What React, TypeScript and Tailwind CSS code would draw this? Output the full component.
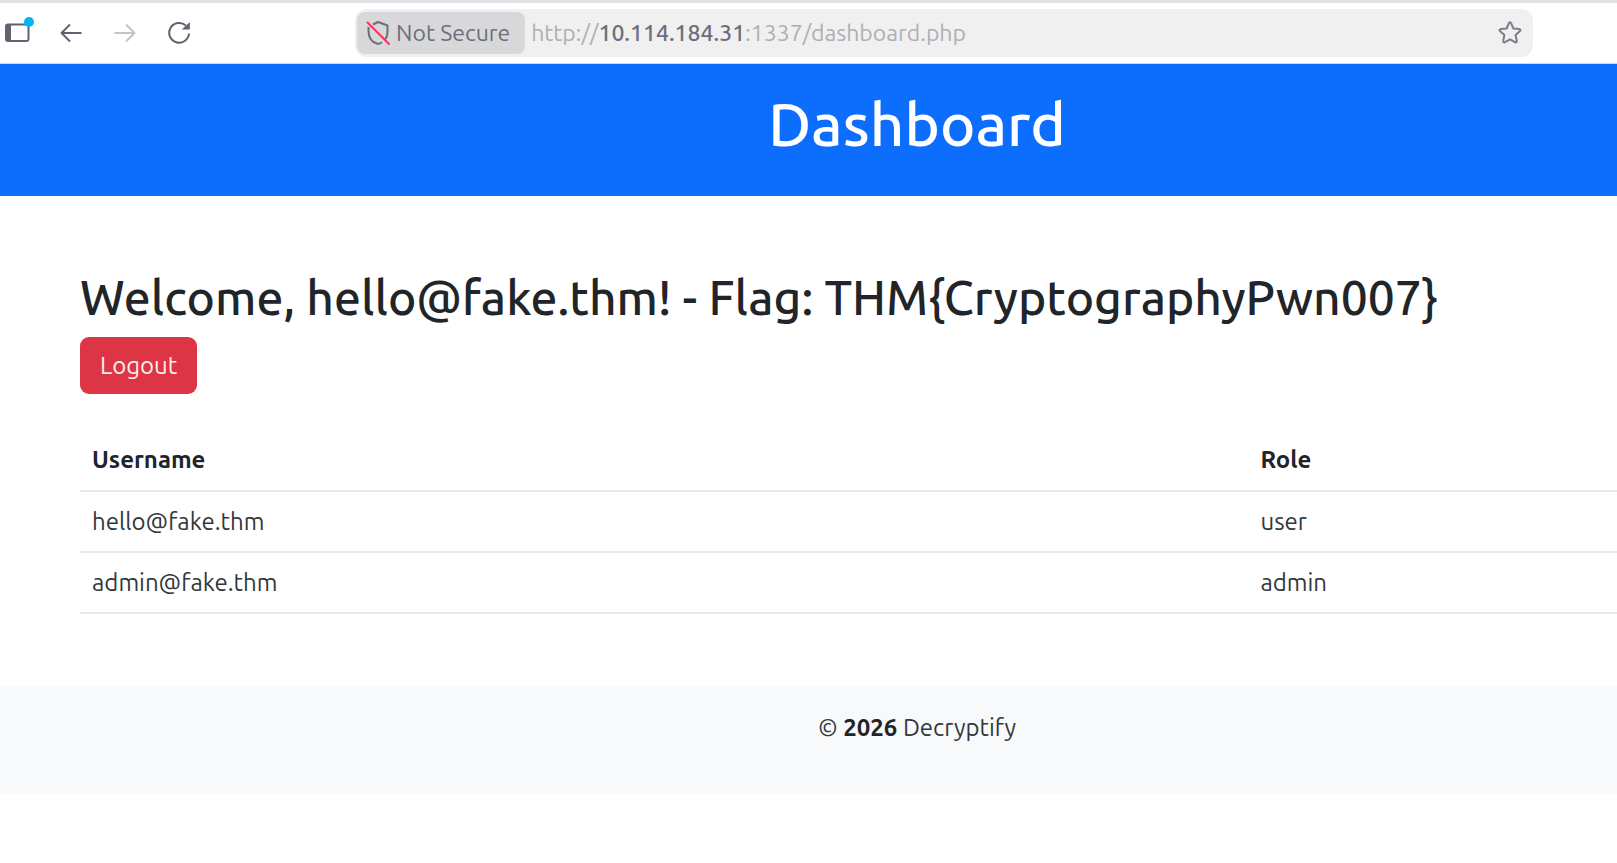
import type { ReactNode } from "react";

const users = [
  { username: "hello@fake.thm", role: "user" },
  { username: "admin@fake.thm", role: "admin" },
];

function ToolbarButton({ label, disabled, children }: { label: string; disabled?: boolean; children: ReactNode }) {
  return (
    <button
      type="button"
      aria-label={label}
      disabled={disabled}
      className="flex h-10 w-[54px] shrink-0 items-center justify-center text-[#5f636e] disabled:text-[#c3c4c8]"
    >
      {children}
    </button>
  );
}

function BrowserToolbar() {
  return (
    <nav className="flex h-16 items-center overflow-hidden border-t-[3px] border-b border-t-[#e0e1e6] border-b-[#d5d7dc] bg-white pr-[84px]">
      <div className="-ml-[10px] flex w-[365px] shrink-0">
        <ToolbarButton label="Sidebar">
          <svg width="34" height="34" viewBox="0 0 34 34" fill="none">
            <rect x="6" y="8.500" width="22.500" height="16.500" rx="2" stroke="currentColor" strokeWidth="2" />
            <path d="M6 8.500h5v16.500H6z" fill="currentColor" />
            <circle cx="29" cy="6" r="5" fill="#00b3f4" />
          </svg>
        </ToolbarButton>
        <ToolbarButton label="Back">
          <svg width="24" height="24" viewBox="0 0 24 24" fill="none" stroke="currentColor" strokeWidth="2">
            <path d="M22.500 12H2M11 3.500 2.500 12l8.500 8.500" strokeLinejoin="round" />
          </svg>
        </ToolbarButton>
        <ToolbarButton label="Forward" disabled>
          <svg width="24" height="24" viewBox="0 0 24 24" fill="none" stroke="currentColor" strokeWidth="2">
            <path d="M1.500 12H22M13 3.500l8.500 8.500-8.500 8.500" strokeLinejoin="round" />
          </svg>
        </ToolbarButton>
        <ToolbarButton label="Reload">
          <svg width="24" height="24" viewBox="0 0 24 24" fill="none">
            <path d="M22 12.500A9.900 9.900 0 1 1 18.800 4.500" stroke="currentColor" strokeWidth="2" />
            <path d="M22.800 1v7.500h-8z" fill="currentColor" />
          </svg>
        </ToolbarButton>
      </div>

      <div className="flex h-12 min-w-0 flex-1 items-center rounded-xl bg-[#f0f0f1] p-[2px] pr-[10px]">
        <button
          type="button"
          className="flex h-[42px] shrink-0 items-center gap-[5px] rounded-lg bg-[#d8d8da] pr-[15px] pl-2 text-[23px] text-[#6b6f7a]"
        >
          <svg width="26" height="26" viewBox="0 0 26 26" fill="none">
            <path
              d="M8 4.500 13 2l9.500 3.500V11c0 4-1 7-3 9M3.500 7v4c0 7 3.500 11.500 9.500 13 1.500-.4 3-1 4-1.800"
              stroke="currentColor"
              strokeWidth="2"
              strokeLinejoin="round"
            />
            <path d="m2 2 22.500 22.500" stroke="#ff2e5f" strokeWidth="2" />
          </svg>
          Not Secure
        </button>
        <p className="min-w-0 flex-1 truncate pl-[6px] text-[23px] text-[#adafb5]">
          http://<span className="font-medium text-[#6b6f7a]">10.114.184.31</span>:1337/dashboard.php
        </p>
        <button type="button" aria-label="Bookmark this page" className="text-[#7b7e88]">
          <svg width="26" height="26" viewBox="0 0 26 26" fill="none" stroke="currentColor" strokeWidth="2">
            <path
              d="M11.900 3.200q1.100-1.700 2.200 0l2.300 5.300 5.900.6q2 .5.700 2l-4.400 4 1.200 5.800q0 2-1.800 1.300l-5-2.900-5 2.900q-1.800.7-1.800-1.300l1.200-5.800-4.400-4q-1.300-1.500.7-2l5.900-.6z"
              strokeLinejoin="round"
            />
          </svg>
        </button>
      </div>
    </nav>
  );
}

export default function App() {
  return (
    <div className="min-h-screen overflow-x-hidden bg-white font-['Ubuntu','Noto_Sans',sans-serif] text-[#212529]">
      <BrowserToolbar />

      {/* page is laid out wider than the window and runs off its right edge */}
      <div className="w-[calc(100%+217px)] text-[24px] leading-9">
        <header className="bg-[#0d6efd] px-6 pt-6 pb-9 text-center text-white">
          <h1 className="text-[60px] leading-[72px] font-medium">Dashboard</h1>
        </header>

        <main className="mx-20 my-[72px]">
          <h2 className="mb-[11px] text-[48px] leading-[58px] font-medium whitespace-nowrap">
            Welcome, hello@fake.thm! - Flag: THM&#123;CryptographyPwn007&#125;
          </h2>
          <a
            href="#logout"
            className="flex h-[57px] w-fit items-center rounded-[9px] bg-[#dc3545] px-5 text-[#fdecee]"
          >
            Logout
          </a>

          <table className="mt-9 w-full border-separate border-spacing-0 text-left">
            <thead>
              <tr>
                <th className="w-[69.8%] border-b-2 border-[#e6e9ec] p-3 font-bold">Username</th>
                <th className="border-b-2 border-[#e6e9ec] p-3 font-bold">Role</th>
              </tr>
            </thead>
            <tbody className="text-[#33373b]">
              {users.map((user) => (
                <tr key={user.username}>
                  <td className="border-b-2 border-[#e6e9ec] p-3 leading-[35px]">{user.username}</td>
                  <td className="border-b-2 border-[#e6e9ec] p-3 leading-[35px]">{user.role}</td>
                </tr>
              ))}
            </tbody>
          </table>
        </main>

        <footer className="bg-[#f8f9fa] px-6 pt-6 pb-12 text-center text-[#33373b]">
          <p>
            © <strong className="font-bold text-[#212529]">2026</strong> Decryptify
          </p>
        </footer>
      </div>
    </div>
  );
}
